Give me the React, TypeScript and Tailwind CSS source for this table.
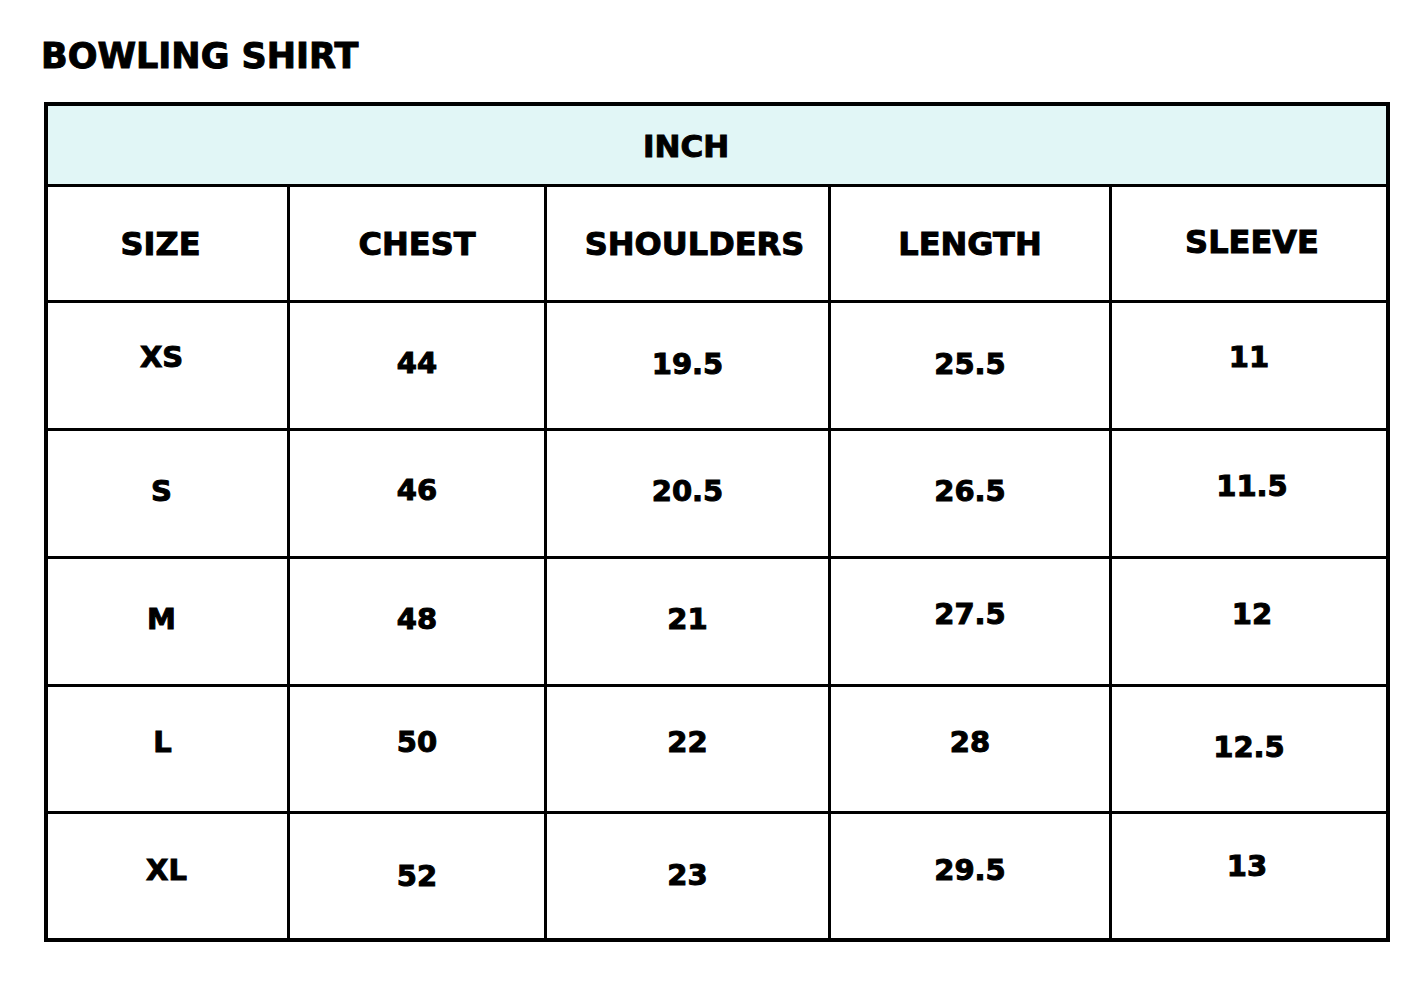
import React from 'react';

interface Cell {
  v: string;
  // nudges the text off the cell centre, as in the source artwork
  cls?: string;
}

const headers: Cell[] = [
  { v: 'SIZE', cls: 'pr-[14px]' },
  { v: 'CHEST' },
  { v: 'SHOULDERS', cls: 'pl-[14px]' },
  { v: 'LENGTH' },
  { v: 'SLEEVE', cls: 'pb-[4px] pl-[6px]' },
];

const rows: Cell[][] = [
  [
    { v: 'XS', cls: 'pb-[16px] pr-[12px]' },
    { v: '44', cls: 'pb-[4px]' },
    { v: '19.5', cls: 'pb-[2px]' },
    { v: '25.5', cls: 'pb-[2px]' },
    { v: '11', cls: 'pb-[16px]' },
  ],
  [
    { v: 'S', cls: 'pb-[4px] pr-[12px]' },
    { v: '46', cls: 'pb-[6px]' },
    { v: '20.5', cls: 'pb-[4px]' },
    { v: '26.5', cls: 'pb-[4px]' },
    { v: '11.5', cls: 'pb-[14px] pl-[6px]' },
  ],
  [
    { v: 'M', cls: 'pb-[4px] pr-[12px]' },
    { v: '48', cls: 'pb-[4px]' },
    { v: '21', cls: 'pb-[4px]' },
    { v: '27.5', cls: 'pb-[14px]' },
    { v: '12', cls: 'pb-[14px] pl-[6px]' },
  ],
  [
    { v: 'L', cls: 'pb-[14px] pr-[10px]' },
    { v: '50', cls: 'pb-[14px]' },
    { v: '22', cls: 'pb-[14px]' },
    { v: '28', cls: 'pb-[14px]' },
    { v: '12.5', cls: 'pb-[4px]' },
  ],
  [
    { v: 'XL', cls: 'pb-[12px] pr-[2px]' },
    { v: '52' },
    { v: '23', cls: 'pb-[2px]' },
    { v: '29.5', cls: 'pb-[12px]' },
    { v: '13', cls: 'pb-[20px] pr-[4px]' },
  ],
];

const font = "font-['DejaVu_Sans',sans-serif] font-bold text-black [-webkit-text-stroke:1px_black]";

export default function App() {
  return (
    <div className="min-h-screen bg-white pt-[39px]">
      <h1 className={`${font} pl-[41px] text-[35px] leading-[34px]`}>BOWLING SHIRT</h1>

      <div className="ml-[44px] mt-[29px] w-[1346px] border-[4px] border-black bg-black">
        <div className="grid grid-cols-[239px_254px_281px_278px_274px] gap-[3px]">
          <div className={`${font} col-span-5 flex h-[78px] items-center justify-center bg-[#e1f6f6] pr-[62px] pt-[2px] text-[31px] leading-none`}>
            INCH
          </div>

          {headers.map((h) => (
            <div
              key={h.v}
              className={`${font} flex h-[113px] items-center justify-center bg-white text-[32px] leading-none ${h.cls ?? ''}`}
            >
              {h.v}
            </div>
          ))}

          {rows.map((row, ri) =>
            row.map((c, ci) => (
              <div
                key={`${ri}-${ci}`}
                className={`${font} flex ${ri === 3 || ri === 4 ? 'h-[124px]' : 'h-[125px]'} items-center justify-center bg-white text-[29px] leading-none ${c.cls ?? ''}`}
              >
                {c.v}
              </div>
            ))
          )}
        </div>
      </div>
    </div>
  );
}
